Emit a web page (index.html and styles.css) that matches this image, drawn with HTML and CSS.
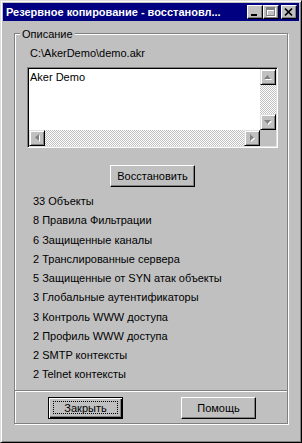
FILE: index.html
```html
<!DOCTYPE html>
<html lang="ru">
<head>
    <meta charset="UTF-8">
    <title>Резервное копирование - восстановление</title>
    <link rel="stylesheet" href="styles.css">
</head>
<body>
    <div class="window">
        <div class="titlebar">
            <span class="title">Резервное копирование - восстановл...</span>
            <div class="caption-buttons">
                <span class="cap-btn">
                    <svg width="14" height="12" viewBox="0 0 14 12"><rect x="3" y="8" width="6" height="2" fill="#000"/></svg>
                </span>
                <span class="cap-btn">
                    <svg width="14" height="12" viewBox="0 0 14 12" shape-rendering="crispEdges">
                        <path d="M3 2h9v9h-9z M4 5v5h7v-5z" fill="#fff" fill-rule="evenodd"/>
                        <path d="M2 1h9v9h-9z M3 4v5h7v-5z" fill="#808080" fill-rule="evenodd"/>
                    </svg>
                </span>
                <span class="cap-btn close">
                    <svg width="14" height="12" viewBox="0 0 14 12"><path d="M3 2.5L10 9.5M10 2.5L3 9.5" stroke="#000" stroke-width="1.7"/></svg>
                </span>
            </div>
        </div>

        <div class="frame">
            <div class="legend">Описание</div>
            <div class="path">C:\AkerDemo\demo.akr</div>

            <div class="listbox">
                <div class="list-text">Aker Demo</div>
                <div class="vscroll">
                    <span class="scroll-btn">
                        <svg width="8" height="5" viewBox="0 0 8 5"><path d="M4.5 1L8 5H1z" fill="#fff"/><path d="M3.5 0L7 4H0z" fill="#808080"/></svg>
                    </span>
                    <span class="track"></span>
                    <span class="scroll-btn">
                        <svg width="8" height="5" viewBox="0 0 8 5"><path d="M1 1H8L4.5 5z" fill="#fff"/><path d="M0 0H7L3.5 4z" fill="#808080"/></svg>
                    </span>
                </div>
                <div class="hscroll">
                    <span class="scroll-btn">
                        <svg width="5" height="8" viewBox="0 0 5 8"><path d="M1 4.5L5 1V8z" fill="#fff"/><path d="M0 3.5L4 0V7z" fill="#808080"/></svg>
                    </span>
                    <span class="track"></span>
                    <span class="scroll-btn">
                        <svg width="5" height="8" viewBox="0 0 5 8"><path d="M1 1L5 4.5L1 8z" fill="#fff"/><path d="M0 0L4 3.5L0 7z" fill="#808080"/></svg>
                    </span>
                </div>
                <div class="corner"></div>
            </div>

            <div class="restore-row">
                <button class="btn restore">Восстановить</button>
            </div>

            <ul class="stats">
                <li>33 Объекты</li>
                <li>8 Правила Фильтрации</li>
                <li>6 Защищенные каналы</li>
                <li>2 Транслированные сервера</li>
                <li>5 Защищенные от SYN атак объекты</li>
                <li>3 Глобальные аутентификаторы</li>
                <li>3 Контроль WWW доступа</li>
                <li>2 Профиль WWW доступа</li>
                <li>2 SMTP контексты</li>
                <li>2 Telnet контексты</li>
            </ul>

            <div class="separator"></div>

            <div class="actions">
                <button class="btn default"><span class="focus">Закрыть</span></button>
                <button class="btn">Помощь</button>
            </div>
        </div>
    </div>
</body>
</html>
```

FILE: styles.css
```css
* {
    box-sizing: border-box;
}

body {
    margin: 0;
    background: #c0c0c0;
    font-family: "Liberation Sans", Arial, sans-serif;
    font-size: 11px;
    color: #000;
}

.window {
    width: 302px;
    height: 443px;
    padding: 2px;
    background: #c0c0c0;
    border: 1px solid;
    border-color: #dfdfdf #000 #000 #dfdfdf;
    box-shadow: inset 1px 1px #fff, inset -1px -1px #808080;
    display: flex;
    flex-direction: column;
}

/* title bar */
.titlebar {
    height: 18px;
    padding: 0 2px 0 3px;
    background: #000080;
    color: #fff;
    display: flex;
    align-items: center;
}

.title {
    flex: 1;
    font-weight: bold;
    white-space: nowrap;
    overflow: hidden;
}

.caption-buttons {
    display: flex;
}

.cap-btn {
    width: 16px;
    height: 14px;
    background: #c0c0c0;
    border: 1px solid;
    border-color: #fff #000 #000 #fff;
    box-shadow: inset -1px -1px #808080;
    display: flex;
}

.cap-btn.close {
    margin-left: 2px;
}

/* group box */
.frame {
    width: 274px;
    height: 391px;
    margin: 12px 0 0 11px;
    border: 1px solid #808080;
    box-shadow: inset 1px 1px #fff, 1px 1px #fff;
    display: flex;
    flex-direction: column;
}

.legend {
    align-self: flex-start;
    margin: -6px 0 0 5px;
    padding: 0 2px;
    background: #c0c0c0;
    line-height: 13px;
}

.path {
    margin: 6px 0 0 15px;
    line-height: 13px;
}

/* list box */
.listbox {
    width: 251px;
    height: 81px;
    margin: 7px 0 0 12px;
    padding: 1px;
    background: #fff;
    border: 1px solid;
    border-color: #808080 #fff #fff #808080;
    box-shadow: inset 1px 1px #000, inset -1px -1px #dfdfdf;
    display: grid;
    grid-template-columns: 1fr 16px;
    grid-template-rows: 1fr 16px;
}

.list-text {
    padding: 2px 0 0 1px;
    line-height: 13px;
}

.vscroll,
.hscroll {
    display: flex;
    background: repeating-conic-gradient(#c0c0c0 0 25%, #fff 0 50%) 0 0 / 2px 2px;
}

.vscroll {
    flex-direction: column;
}

.track {
    flex: 1;
}

.scroll-btn {
    width: 16px;
    height: 16px;
    background: #c0c0c0;
    border: 1px solid;
    border-color: #dfdfdf #000 #000 #dfdfdf;
    box-shadow: inset 1px 1px #fff, inset -1px -1px #808080;
    display: flex;
    align-items: center;
    justify-content: center;
}

.corner {
    background: #c0c0c0;
}

/* buttons */
.btn {
    height: 22px;
    padding: 0;
    background: #c0c0c0;
    font-family: inherit;
    font-size: 11px;
    color: #000;
    border: 1px solid;
    border-color: #fff #000 #000 #fff;
    box-shadow: inset -1px -1px #808080;
    display: flex;
    align-items: center;
    justify-content: center;
}

.restore-row {
    margin-top: 17px;
    padding-left: 3px;
    display: flex;
    justify-content: center;
}

.restore {
    width: 85px;
}

.stats {
    margin: 5px 0 0;
    padding: 0 0 0 18px;
    list-style: none;
}

.stats li {
    height: 19.25px;
    line-height: 19.25px;
    white-space: nowrap;
}

.separator {
    height: 2px;
    margin-top: 5.5px;
    border-top: 1px solid #808080;
    border-bottom: 1px solid #fff;
}

.actions {
    padding: 5px 31px 0 33px;
    display: flex;
    justify-content: space-between;
}

.actions .btn {
    width: 75px;
}

.btn.default {
    border: 1px solid #000;
    box-shadow: inset 1px 1px #fff, inset -1px -1px #000, inset -2px -2px #808080;
    align-items: stretch;
    justify-content: stretch;
    padding: 3px 4px 4px 4px;
}

.focus {
    flex: 1;
    border: 1px dotted #000;
    display: flex;
    align-items: center;
    justify-content: center;
}
```
